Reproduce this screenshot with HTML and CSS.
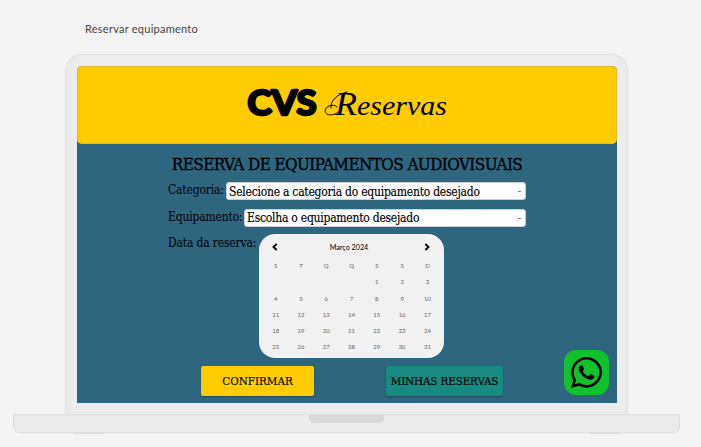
FILE: index.html
```html
<!DOCTYPE html>
<html lang="pt-BR">
<head>
<meta charset="utf-8">
<title>Reservar equipamento</title>
<link rel="stylesheet" href="styles.css">
</head>
<body>
<h1 class="caption"><span>Reservar equipamento</span></h1>
<div class="laptop">
  <div class="lid">
    <main class="screen">
      <header class="banner">
        <svg class="logo" width="216" height="60" viewBox="0 -10 216 60" aria-label="CVS Reservas">
          <text class="logo-bold" x="3.500" y="32" textLength="69" lengthAdjust="spacingAndGlyphs">CVS</text>
          <path class="swash" d="M93 24c-3-4-12-1-12 4 0 5 10 5 13 1M87 25c-1-8 7-14 16-16"/>
          <text class="logo-script" x="91" y="32" textLength="22" lengthAdjust="spacingAndGlyphs">R</text>
          <text class="logo-script small" x="113" y="32" textLength="90" lengthAdjust="spacingAndGlyphs">eservas</text>
        </svg>
      </header>
      <form class="form">
        <h2 class="title"><span>RESERVA DE EQUIPAMENTOS AUDIOVISUAIS</span></h2>
        <div class="row">
          <label class="label cat">Categoria:</label>
          <div class="select"><span class="opt-cat">Selecione a categoria do equipamento desejado</span><i class="caret"></i></div>
        </div>
        <div class="row">
          <label class="label equip">Equipamento:</label>
          <div class="select"><span class="opt-equip">Escolha o equipamento desejado</span><i class="caret"></i></div>
        </div>
        <div class="row date-row">
          <label class="label date">Data da reserva:</label>
          <section class="calendar">
            <div class="month">
              <svg width="6" height="8" viewBox="0 0 6 8"><path d="M4.700 1 1.500 4l3.200 3"/></svg>
              <span>Março 2024</span>
              <svg width="6" height="8" viewBox="0 0 6 8"><path d="M1.300 1l3.200 3-3.200 3"/></svg>
            </div>
            <div class="days">
              <span>S</span><span>T</span><span>Q</span><span>Q</span><span>S</span><span>S</span><span>D</span>
              <span class="first">1</span><span>2</span><span>3</span>
              <span>4</span><span>5</span><span>6</span><span>7</span><span>8</span><span>9</span><span>10</span>
              <span>11</span><span>12</span><span>13</span><span>14</span><span>15</span><span>16</span><span>17</span>
              <span>18</span><span>19</span><span>20</span><span>21</span><span>22</span><span>23</span><span>24</span>
              <span>25</span><span>26</span><span>27</span><span>28</span><span>29</span><span>30</span><span>31</span>
            </div>
          </section>
        </div>
        <div class="actions">
          <button type="button" class="btn confirm">CONFIRMAR</button>
          <button type="button" class="btn mine">MINHAS RESERVAS</button>
        </div>
      </form>
      <a class="whatsapp" aria-label="WhatsApp">
        <svg width="31" height="31" viewBox="0 0 24 24"><path d="M17.472 14.382c-.297-.149-1.758-.867-2.030-.967-.273-.099-.471-.148-.670.150-.197.297-.767.966-.940 1.164-.173.199-.347.223-.644.075-.297-.150-1.255-.463-2.390-1.475-.883-.788-1.480-1.761-1.653-2.059-.173-.297-.018-.458.130-.606.134-.133.298-.347.446-.520.149-.174.198-.298.298-.497.099-.198.050-.371-.025-.520-.075-.149-.669-1.612-.916-2.207-.242-.579-.487-.500-.669-.510-.173-.008-.371-.010-.570-.010-.198 0-.520.074-.792.372-.272.297-1.040 1.016-1.040 2.479 0 1.462 1.065 2.875 1.213 3.074.149.198 2.096 3.200 5.077 4.487.709.306 1.262.489 1.694.625.712.227 1.360.195 1.871.118.571-.085 1.758-.719 2.006-1.413.248-.694.248-1.289.173-1.413-.074-.124-.272-.198-.570-.347m-5.421 7.403h-.004a9.870 9.870 0 01-5.031-1.378l-.361-.214-3.741.982.998-3.648-.235-.374a9.860 9.860 0 01-1.510-5.260c.001-5.450 4.436-9.884 9.888-9.884 2.640 0 5.122 1.030 6.988 2.898a9.825 9.825 0 012.893 6.994c-.003 5.450-4.437 9.884-9.885 9.884m8.413-18.297A11.815 11.815 0 0012.050 0C5.495 0 .160 5.335.157 11.892c0 2.096.547 4.142 1.588 5.945L.057 24l6.305-1.654a11.882 11.882 0 005.683 1.448h.005c6.554 0 11.890-5.335 11.893-11.893a11.821 11.821 0 00-3.480-8.413z"/></svg>
      </a>
    </main>
  </div>
  <div class="base"><div class="notch"></div></div>
  <div class="feet"><i></i><i></i></div>
</div>
</body>
</html>
```
FILE: styles.css
```css
* { box-sizing: border-box; }
body {
  margin: 0;
  height: 447px;
  overflow: hidden;
  background: #f4f4f4;
  color: #000;
  font-family: "DejaVu Serif Condensed", "DejaVu Serif", serif;
  font-stretch: condensed;
}
.caption {
  margin: 0;
  padding: 21px 0 0 85px;
  height: 54px;
  font: 400 11px/16px Lato, sans-serif;
  letter-spacing: 0.25px;
  color: #444;
}
.laptop { width: 667px; margin-left: 13px; }
.lid {
  width: 563px;
  height: 360px;
  margin-left: 52px;
  padding: 11px 10px 0 11px;
  background: #ececec;
  border: 1px solid #e2e2e2;
  border-bottom: 0;
  border-radius: 17px 17px 0 0;
}
.screen {
  position: relative;
  height: 337px;
  background: #2e6680;
  border-radius: 5px 5px 0 0;
}
.banner {
  height: 78px;
  display: flex;
  padding: 7px 0 0 167px;
  background: #ffcc02;
  border-radius: 5px;
  box-shadow: inset 0 0 0 .5px #b5b06a;
}
.logo { display: block; }
.logo-bold {
  font: 700 34px Lato, sans-serif;
  stroke: #000;
  stroke-width: 2.600px;
  stroke-linejoin: round;
}
.logo-script { font: italic 400 34px "Liberation Serif", serif; }
.logo-script.small { font-size: 28px; }
.swash { fill: none; stroke: #000; stroke-width: 1; stroke-linecap: round; }
.form { padding: 9px 91px 0; }
.title {
  margin: 0 0 7px;
  height: 22px;
  font-size: 17px;
  line-height: 22px;
  font-weight: 400;
  text-align: center;
  white-space: nowrap;
  letter-spacing: -0.6px;
  -webkit-text-stroke: .3px #000;
}
.row {
  display: flex;
  align-items: flex-start;
  width: 358px;
  height: 26.500px;
  white-space: nowrap;
}
.label {
  flex: none;
  font-size: 12px;
  line-height: 17px;
  letter-spacing: -0.17px;
}
.cat { width: 58px; }
.equip { width: 76px; }
.date { width: 91px; }
.select {
  flex: 1;
  display: flex;
  align-items: center;
  justify-content: space-between;
  height: 18px;
  padding: 1px 4px 0 2px;
  background: #fff;
  border: 1px solid #c5d0d5;
  border-radius: 3px;
  font-size: 12px;
  line-height: 16px;
  letter-spacing: -0.24px;
  -webkit-text-stroke: .15px #000;
}
.caret {
  width: 3px;
  height: 1px;
  background: #888;
}
.date-row { height: 131px; }
.calendar {
  width: 185px;
  height: 124px;
  margin-top: -1px;
  background: #f1f1f1;
  border-radius: 16px;
  font-family: Lato, sans-serif;
}
.month {
  display: flex;
  align-items: center;
  justify-content: space-between;
  padding: 3px 14px 0 13px;
  height: 23px;
  font-size: 7.200px;
}
.month span { position: relative; left: -2px; }
.month svg { fill: none; stroke: #000; stroke-width: 1.800; }
.days {
  display: grid;
  grid-template-columns: repeat(7, 25.300px);
  grid-auto-rows: 16.300px;
  padding-left: 4px;
  font-size: 6px;
  line-height: 18px;
  text-align: center;
  color: #666;
}
.first { grid-column: 5; }
.actions {
  display: flex;
  padding-left: 33px;
  gap: 72px;
}
.btn {
  height: 30px;
  padding: 0;
  border: 0;
  border-radius: 2px;
  font: inherit;
  font-size: 11.500px;
  white-space: nowrap;
  color: #000;
  -webkit-text-stroke: .15px #000;
  box-shadow: 0 1px 2px rgba(0, 0, 0, .3);
}
.confirm { width: 113px; background: #ffcc02; }
.mine { width: 117px; background: #188a80; letter-spacing: -.1px; }
.whatsapp {
  position: absolute;
  right: 8px;
  bottom: 8px;
  width: 45px;
  height: 45px;
  display: grid;
  place-items: center;
  background: #10c02c;
  border-radius: 12px;
}
.base {
  height: 19px;
  background: #ebebeb;
  border: 1px solid #e0e0e0;
  border-radius: 1px 1px 6px 6px;
}
.notch {
  width: 75px;
  height: 8px;
  margin: 0 auto;
  background: #d9d9d9;
  border-radius: 0 0 5px 5px;
}
.feet {
  display: flex;
  justify-content: space-between;
  padding: 0 60px;
}
.feet i { width: 31px; height: 1px; background: #dedede; }
```
